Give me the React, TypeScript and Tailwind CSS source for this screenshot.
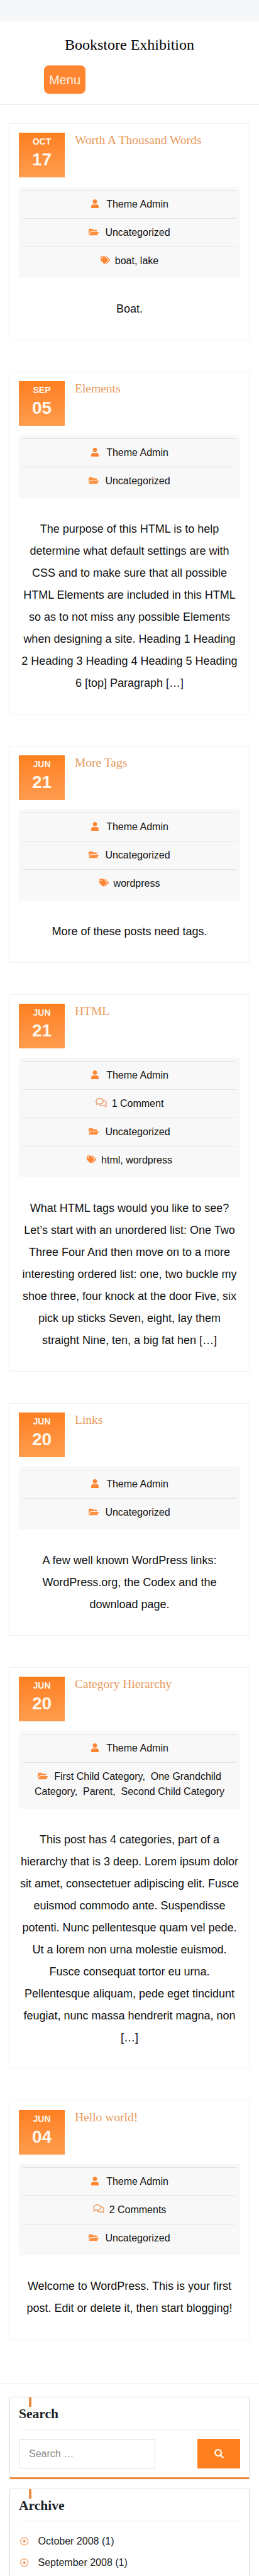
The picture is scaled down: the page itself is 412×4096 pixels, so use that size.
import React from "react";
import { FaUser, FaFolderOpen, FaTags, FaRegComments, FaSearch, FaRegDotCircle } from "react-icons/fa";

type Post = {
  mon: string;
  day: string;
  title: string;
  comments?: string;
  cats: string;
  tags?: string;
  text: string;
};

const posts: Post[] = [
  { mon: "OCT", day: "17", title: "Worth A Thousand Words", cats: "Uncategorized", tags: "boat, lake", text: "Boat." },
  {
    mon: "SEP",
    day: "05",
    title: "Elements",
    cats: "Uncategorized",
    text: "The purpose of this HTML is to help determine what default settings are with CSS and to make sure that all possible HTML Elements are included in this HTML so as to not miss any possible Elements when designing a site. Heading 1 Heading 2 Heading 3 Heading 4 Heading 5 Heading 6 [top] Paragraph […]",
  },
  { mon: "JUN", day: "21", title: "More Tags", cats: "Uncategorized", tags: "wordpress", text: "More of these posts need tags." },
  {
    mon: "JUN",
    day: "21",
    title: "HTML",
    comments: "1 Comment",
    cats: "Uncategorized",
    tags: "html, wordpress",
    text: "What HTML tags would you like to see? Let’s start with an unordered list: One Two Three Four And then move on to a more interesting ordered list: one, two buckle my shoe three, four knock at the door Five, six pick up sticks Seven, eight, lay them straight Nine, ten, a big fat hen […]",
  },
  {
    mon: "JUN",
    day: "20",
    title: "Links",
    cats: "Uncategorized",
    text: "A few well known WordPress links: WordPress.org, the Codex and the download page.",
  },
  {
    mon: "JUN",
    day: "20",
    title: "Category Hierarchy",
    cats: "First Child Category,\u00A0 One Grandchild Category,\u00A0 Parent,\u00A0 Second Child Category",
    text: "This post has 4 categories, part of a hierarchy that is 3 deep. Lorem ipsum dolor sit amet, consectetuer adipiscing elit. Fusce euismod commodo ante. Suspendisse potenti. Nunc pellentesque quam vel pede. Ut a lorem non urna molestie euismod. Fusce consequat tortor eu urna. Pellentesque aliquam, pede eget tincidunt feugiat, nunc massa hendrerit magna, non […]",
  },
  {
    mon: "JUN",
    day: "04",
    title: "Hello world!",
    comments: "2 Comments",
    cats: "Uncategorized",
    text: "Welcome to WordPress. This is your first post. Edit or delete it, then start blogging!",
  },
];

function MetaRow({ icon, children }: { icon: React.ReactNode; children: React.ReactNode }) {
  return (
    <li className="border-t border-[#e2e2e2] py-[10px] text-center text-[16px] leading-6 text-[#111]">
      {icon}
      {children}
    </li>
  );
}

function PostCard({ p }: { p: Post }) {
  return (
    <article className="mx-[15px] border border-[#f0f0f0] bg-white px-[14px] pb-[31px] pt-[14px]">
      <div className="flex gap-4">
        <div className="flex h-[71px] w-[73px] shrink-0 flex-col items-center bg-gradient-to-b from-[#ff7f1f] to-[#ff9c4d] font-bold text-[#fff8ee]">
          <span className="mt-[5px] text-[14px] leading-[18px]">{p.mon}</span>
          <span className="mt-[2px] text-[28px] leading-[36px]">{p.day}</span>
        </div>
        <h2 className="font-['Liberation_Serif',serif] text-[19.5px] font-normal leading-6 text-[#e8995c]">{p.title}</h2>
      </div>
      <ul className="mt-[15px] bg-[#f8f8f8] px-[6px] py-[5px]">
        <MetaRow icon={<FaUser className="mr-[11px] inline align-[-1px] text-[14px] text-[#ff8633]" />}>Theme Admin</MetaRow>
        {p.comments && (
          <MetaRow icon={<FaRegComments className="mr-[8px] inline align-[-2px] text-[18px] text-[#eda06a]" />}>{p.comments}</MetaRow>
        )}
        <MetaRow icon={<FaFolderOpen className="mr-[10px] inline align-[-2px] text-[16px] text-[#ff8f40]" />}>{p.cats}</MetaRow>
        {p.tags && (
          <MetaRow icon={<FaTags className="mr-[8px] inline align-[-1px] text-[15px] text-[#ff8633]" />}>{p.tags}</MetaRow>
        )}
      </ul>
      <p className="mt-[32px] text-center text-[18px] leading-[35px] text-[#111]">{p.text}</p>
    </article>
  );
}

function Widget({ title, children, className }: { title: string; children: React.ReactNode; className: string }) {
  return (
    <section className={"relative mx-[15px] rounded-[2px] border border-[#dcdcdc] bg-white px-[14px] pt-[12px] shadow-[0_1px_2px_rgba(0,0,0,0.08)] " + className}>
      <span className="absolute left-[30px] top-0 h-[15px] w-1 bg-[#e98c44]" />
      <h3 className="ml-[2px] border-b border-[#ebebeb] pb-[10px] font-['Liberation_Serif',serif] text-[21.5px] font-bold leading-7 text-[#1a1f26]">
        <span className="-ml-[2px]">{title}</span>
      </h3>
      {children}
    </section>
  );
}

export default function App() {
  return (
    <div className="h-[4096px] overflow-hidden bg-white font-['Liberation_Sans',Arial,sans-serif]">
      <div className="h-[33px] bg-gradient-to-b from-[#f4f5f8] to-[#f7f8fa]" />
      <header className="flex h-[134px] flex-col border-b-2 border-[#f0f0f0]">
        <h1 className="mt-[24px] text-center font-['Liberation_Serif',serif] text-[24px] font-normal leading-[28px] text-black">
          Bookstore Exhibition
        </h1>
        <button className="ml-[70px] mt-[19px] h-[45px] w-[66px] rounded-[8px] bg-[#ff8530] text-[20px] leading-none text-[#fff3e6]">
          Menu
        </button>
      </header>
      <main className="flex flex-col gap-[50px] pb-[70px] pt-[29px]">
        {posts.map((p) => (
          <PostCard key={p.title} p={p} />
        ))}
      </main>
      <aside className="border-t border-[#e5e5e5] pt-[20px]">
        <Widget title="Search" className="border-b-[3px] border-b-[#ef8a3c] pb-[14px]">
          <form className="mt-[15px] flex justify-between">
            <input
              type="text"
              placeholder="Search …"
              className="h-[47px] w-[217px] border border-[#ddd] bg-white px-[15px] text-[16px] text-[#111] placeholder:text-[#8a8a8a]"
            />
            <button type="button" className="flex h-[47px] w-[68px] items-center justify-center bg-[#ff7f1f] text-[15px] text-[#fff3e6]">
              <FaSearch />
            </button>
          </form>
        </Widget>
        <Widget title="Archive" className="mt-[15px] h-[200px]">
          <ul className="mt-[15px] text-[16px] leading-[34px] text-[#222]">
            {["October 2008 (1)", "September 2008 (1)"].map((t) => (
              <li key={t} className="flex items-center">
                <FaRegDotCircle className="ml-[2px] mr-[15px] text-[13.5px] text-[#ec9a60]" />
                {t}
              </li>
            ))}
          </ul>
        </Widget>
      </aside>
    </div>
  );
}
